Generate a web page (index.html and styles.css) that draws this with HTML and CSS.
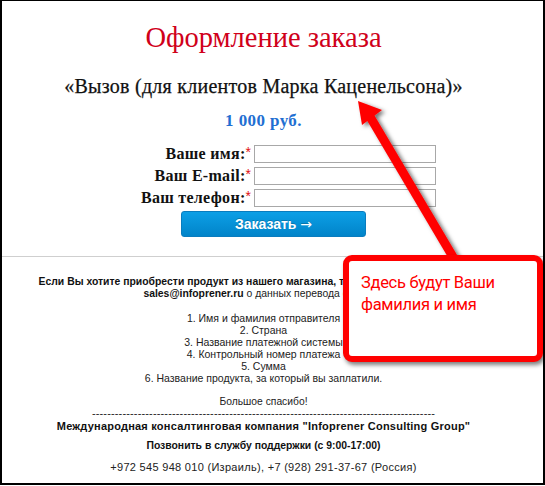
FILE: index.html
```html
<!DOCTYPE html>
<html lang="ru">
<head>
<meta charset="utf-8">
<title>Оформление заказа</title>
<link rel="stylesheet" href="styles.css">
</head>
<body>
<div class="frame">
  <div class="page">
    <h1 class="title">Оформление заказа</h1>
    <div class="product">«Вызов (для клиентов Марка Каценельсона)»</div>
    <div class="price">1 000 руб.</div>
    <form class="order-form">
      <div class="form-row">
        <label class="form-label">Ваше имя:<span class="req">*</span></label>
        <input class="form-input" type="text">
      </div>
      <div class="form-row">
        <label class="form-label">Ваш E-mail:<span class="req">*</span></label>
        <input class="form-input" type="text">
      </div>
      <div class="form-row">
        <label class="form-label">Ваш телефон:<span class="req">*</span></label>
        <input class="form-input" type="text">
      </div>
      <button class="submit" type="button">Заказать <span class="submit-arrow">→</span></button>
    </form>
  </div>
  <div class="divider"></div>
  <div class="info">
    <div class="intro">
      <b>Если Вы хотите приобрести продукт из нашего магазина, то напишите, пожалуйста, на</b><br>
      <b>sales@infoprener.ru</b> о данных перевода средств:
    </div>
    <div class="list">
      1. Имя и фамилия отправителя<br>
      2. Страна<br>
      3. Название платежной системы<br>
      4. Контрольный номер платежа<br>
      5. Сумма<br>
      6. Название продукта, за который вы заплатили.
    </div>
    <div class="thanks">Большое спасибо!</div>
    <div class="dashes">------------------------------------------------------------------------------------------</div>
    <div class="company">Международная консалтинговая компания "Infoprener Consulting Group"</div>
    <div class="support">Позвонить в службу поддержки (с 9:00-17:00)</div>
    <div class="phones">+972 545 948 010 (Израиль), +7 (928) 291-37-67 (Россия)</div>
  </div>

  <svg class="arrow" width="545" height="486" viewBox="0 0 545 486">
    <defs>
      <filter id="shadow" x="-20%" y="-20%" width="140%" height="140%">
        <feDropShadow dx="3" dy="2" stdDeviation="2" flood-color="#000" flood-opacity="0.55"/>
      </filter>
    </defs>
    <g filter="url(#shadow)">
      <line x1="369" y1="115" x2="456" y2="262" stroke="#ff0000" stroke-width="9"/>
      <polygon points="358,101 382,110 362,125" fill="#ff0000"/>
    </g>
  </svg>

  <div class="callout">Здесь будут Ваши<br>фамилия и имя</div>
</div>
</body>
</html>
```

FILE: styles.css
```css
html, body {
  margin: 0;
  padding: 0;
  background: #fff;
}

body {
  width: 545px;
  height: 486px;
  overflow: hidden;
}

.frame {
  position: relative;
  box-sizing: border-box;
  width: 545px;
  height: 485px;
  border-style: solid;
  border-color: #000;
  border-width: 1px 2px 2px 2px;
  overflow: hidden;
}

.page {
  padding-top: 21px;
  padding-right: 18px;
  text-align: center;
  font-family: "Liberation Serif", "DejaVu Serif", serif;
}

.title {
  margin: 0;
  font-size: 28.5px;
  line-height: 32px;
  font-weight: normal;
  color: #d0001a;
}

.product {
  margin-top: 20px;
  font-size: 20px;
  line-height: 24px;
  letter-spacing: 0.25px;
  color: #111;
  -webkit-text-stroke: 0.25px #111;
}

.price {
  margin-top: 13px;
  font-size: 17px;
  line-height: 20px;
  letter-spacing: 0.4px;
  font-weight: bold;
  color: #1f6fd2;
}

.order-form {
  margin: 14px 0 0 98px;
  display: flex;
  flex-direction: column;
  align-items: flex-start;
  gap: 4px;
}

.form-row {
  display: flex;
  align-items: center;
  gap: 3px;
  height: 18px;
}

.form-label {
  width: 151px;
  text-align: right;
  font-size: 16px;
  line-height: 18px;
  letter-spacing: 0.3px;
  font-weight: bold;
  color: #111;
  white-space: nowrap;
}

.req {
  color: #e01010;
  font-family: "Liberation Sans", Arial, sans-serif;
  font-weight: normal;
  font-size: 14px;
  vertical-align: top;
  line-height: 14px;
  letter-spacing: 0;
}

.form-input {
  box-sizing: border-box;
  width: 182px;
  height: 18px;
  margin: 0;
  padding: 0 2px;
  border: 1px solid #a8a8a8;
  background: #fff;
}

.submit {
  box-sizing: border-box;
  margin: 0 0 0 81px;
  width: 185px;
  height: 26px;
  padding: 0;
  border: 1px solid #0a7cbe;
  border-radius: 3px;
  background: linear-gradient(#0d9fe6, #0184c9);
  color: #fff;
  font-family: "Liberation Sans", Arial, sans-serif;
  font-size: 14px;
  font-weight: bold;
  text-shadow: 0 -1px 0 rgba(0, 0, 0, 0.2);
}

.submit-arrow {
  font-family: "DejaVu Sans", sans-serif;
  font-weight: normal;
  font-size: 14px;
}

.divider {
  margin-top: 19px;
  height: 1px;
  background: #cfcfcf;
}

.info {
  padding-right: 18px;
  text-align: center;
  font-family: "Liberation Sans", Arial, sans-serif;
  font-size: 10.5px;
  line-height: 12px;
  color: #222;
}

.intro {
  margin-top: 19px;
  font-size: 10.4px;
  white-space: nowrap;
}

.intro b {
  color: #111;
}

.list {
  margin-top: 12px;
}

.thanks {
  margin-top: 12px;
  font-size: 10.3px;
}

.dashes {
  font-size: 11px;
  line-height: 10px;
  letter-spacing: 0.15px;
  white-space: nowrap;
}

.company {
  margin-top: 2px;
  font-size: 11px;
  letter-spacing: 0.22px;
  font-weight: bold;
  color: #111;
}

.support {
  margin-top: 8px;
  font-size: 10.4px;
  font-weight: bold;
  color: #111;
}

.phones {
  margin-top: 9px;
  font-size: 11px;
  letter-spacing: 0.3px;
}

.arrow {
  position: absolute;
  left: -2px;
  top: -1px;
  pointer-events: none;
}

.callout {
  position: absolute;
  left: 341px;
  top: 254px;
  box-sizing: border-box;
  width: 200px;
  height: 107px;
  padding: 11px 0 0 12px;
  border: 6px solid #ff0000;
  border-radius: 9px;
  background: #fff;
  box-shadow: 2px 3px 4px rgba(0, 0, 0, 0.5);
  font-family: Roboto, "Liberation Sans", sans-serif;
  font-size: 16.5px;
  letter-spacing: -0.3px;
  line-height: 21.5px;
  color: #ff0000;
}
```
